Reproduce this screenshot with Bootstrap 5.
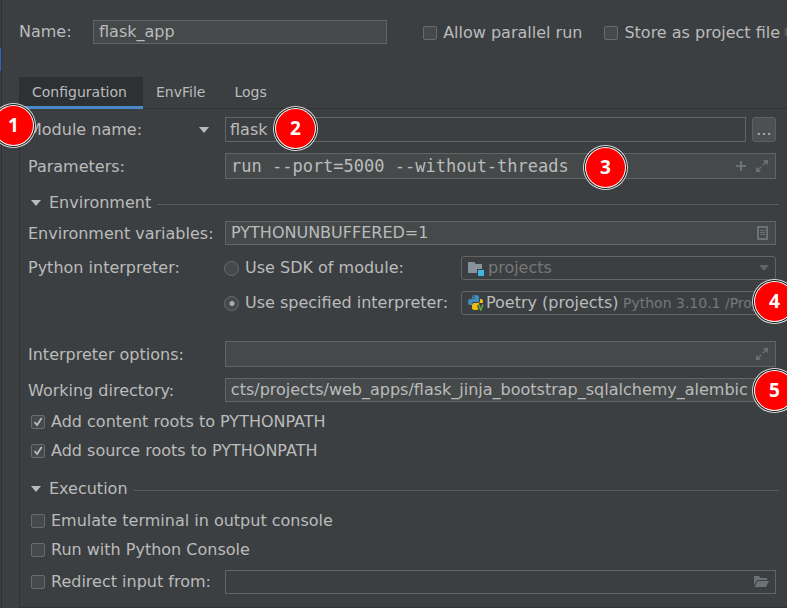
<!DOCTYPE html>
<html lang="en" data-bs-theme="dark">
<head>
<meta charset="utf-8">
<meta name="viewport" content="width=device-width, initial-scale=1">
<title>Run configuration: flask_app</title>
<link href="https://cdn.jsdelivr.net/npm/bootstrap@5.3.0/dist/css/bootstrap.min.css" rel="stylesheet">
<style>
  :root { --panel:#3c3f41; --field:#45494a; --edge:#646464; --ink:#bbbbbb; --line:#323232; --faint:#777777; --glyph:#6a7275; }
  body { background:var(--panel); color:var(--ink); font-family:"DejaVu Sans",sans-serif; font-size:16px; line-height:22px; overflow-x:hidden; }
  input, select, button { color:inherit; }
  .dialog-page { min-height:100vh; overflow:hidden; white-space:nowrap; }
  .dialog-main { min-width:0; }
  .tree-edge { width:2px; border-right:1px solid var(--line); }
  .tree-edge i { display:block; width:1px; height:23px; margin-top:48px; background:#2f65ca; }
  .top-bar { height:64px; padding-left:17px; }
  .top-bar .check-line { padding-top:1px; }
  .store-option { margin-left:22px; }
  .name-label { width:74px; }
  .field { display:flex; align-items:center; min-width:0; height:24px; background:var(--field); border:1px solid var(--edge); }
  .field.tall { height:26px; }
  .field.plain { height:25px; }
  .field.plain input { padding:0 4px; }
  .field.plain, .field.combo, .field.flat { background:var(--panel); }
  .field.combo { border-radius:3px; padding:0 6px; }
  .field.combo.off { color:var(--faint); }
  .field.path { padding-right:22px; }
  .field input { flex:1 1 0; min-width:0; width:100%; height:22px; padding:0 5px; background:transparent; border:0; outline:0; }
  .field select, .plain-select { appearance:none; background:transparent; border:0; padding:0; outline:0; }
  .field svg { flex:none; }
  .field button { display:flex; border:0; padding:0; margin-right:7px; background:transparent; color:var(--glyph); }
  .field button + button { margin-left:2px; }
  .field button.folder { margin-right:5px; }
  .name-field { width:294px; }
  .field .code-input { font-family:"DejaVu Sans Mono",monospace; font-size:17px; }
  .tick, .dot { appearance:none; flex:none; margin:0; width:14px; height:14px; background:var(--field) center/12px no-repeat; border:1px solid #6b6b6b; border-radius:2px; }
  .tick:checked { background-image:url("data:image/svg+xml,%3Csvg xmlns='http://www.w3.org/2000/svg' viewBox='0 0 12 12'%3E%3Cpath d='M2.5 6l2.6 3L9.7 2' fill='none' stroke='%23bbbbbb' stroke-width='1.8'/%3E%3C/svg%3E"); }
  .dot { width:15px; height:15px; border-radius:50%; }
  .dot:checked { background-image:radial-gradient(circle,#aaaaaa 2px,transparent 3px); }
  .check-line { display:flex; align-items:center; gap:6px; height:24px; }
  .config-body .check-line { margin-left:3px; }
  .config-tabs { margin:13px 0 0 17px; border-bottom:1px solid var(--line); font-size:14px; line-height:20px; }
  .config-tabs button { height:32px; margin-bottom:-1px; padding:0 16px 0 13px; border:0; border-bottom:3px solid transparent; background:transparent; }
  .config-tabs button.active { background:#2d3134; border-color:#4a88c7; }
  .config-body { margin-left:17px; border-left:1px solid var(--line); border-bottom:1px solid var(--line); padding:8px 11px 13px 8px; }
  .form-line { display:flex; align-items:center; position:relative; margin-bottom:11px; }
  .form-line > .caption { flex:none; width:197px; }
  .form-line > label.caption { padding-top:1px; }
  .choice { flex:none; width:237px; margin-left:-1px; display:flex; align-items:center; gap:6px; }
  .section-head { display:flex; align-items:center; gap:6px; height:24px; margin:0 -3px 0 3px; }
  .section-head button { display:flex; align-items:center; gap:8px; border:0; padding:0; background:transparent; }
  .section-head hr { flex:1; margin:2px 0 0; border-color:#5a5a5a; opacity:1; }
  .more-btn { flex:none; width:24px; height:25px; padding:0; margin-left:6px; color:var(--ink); background:#4c5052; border:1px solid #5e6060; border-radius:3px; line-height:20px; }
  .runtime { color:var(--faint); font-size:14px; }
  .step { position:absolute; z-index:2; width:39px; height:39px; border-radius:50%; background:#f00; color:#fff; text-align:center; font:700 19px/39px "Noto Sans",sans-serif; box-shadow:0 0 0 1px #fff,0 0 0 2px #111,0 0 0 3px #ddd; }
  .step-1 { left:-34px; top:-11px; }
  .step-2 { left:248px; top:-8px; }
  .step-3 { right:151px; top:-5px; }
  .step-4 { right:-18px; top:-9px; }
  .step-5 { right:-18px; top:-7px; }
  .gap-s { margin-bottom:5px; } .gap-sm { margin-bottom:6px; } .gap-m { margin-bottom:8px; } .gap-ml { margin-bottom:12px; } .gap-l { margin-bottom:14px; } .gap-xl { margin-bottom:26px; }
</style>
<script src="https://cdn.jsdelivr.net/npm/bootstrap@5.3.0/dist/js/bootstrap.bundle.min.js"></script>
</head>
<body>
<div class="dialog-page d-flex">
  <div class="tree-edge flex-shrink-0"><i></i></div>
  <main class="dialog-main flex-grow-1">
    <div class="top-bar d-flex align-items-center">
      <label class="name-label flex-shrink-0" for="cfgName">Name:</label>
      <div class="field name-field flex-shrink-0"><input id="cfgName" value="flask_app"></div>
      <label class="check-line flex-shrink-0 ms-auto"><input class="tick" type="checkbox">Allow parallel run</label>
      <label class="check-line store-option flex-shrink-0"><input class="tick" type="checkbox">Store as project file</label>
      <svg class="flex-shrink-0 ms-1" width="3" height="14" viewBox="0 0 3 14" fill="#5d6062"><path d="M3 3H1.500L.5 5l1 1.500v1L.5 9l1 2H3z"/></svg>
    </div>
    <div class="config-tabs d-flex" role="tablist">
      <button class="active" role="tab" aria-selected="true">Configuration</button>
      <button role="tab">EnvFile</button>
      <button role="tab">Logs</button>
    </div>
    <div class="config-body">
      <div class="form-line">
        <div class="caption d-flex align-items-center">
          <select class="plain-select flex-grow-1" aria-label="Target kind"><option>Module name:</option></select>
          <svg class="me-3" width="10" height="6" viewBox="0 0 10 6" fill="#bbb"><path d="M0 0h10L5 6z"/></svg>
        </div>
        <div class="field plain flex-grow-1"><input value="flask" aria-label="Module name"></div>
        <button class="more-btn" aria-label="Browse">...</button>
        <span class="step step-1">1</span><span class="step step-2">2</span>
      </div>
      <div class="form-line gap-ml">
        <label class="caption" for="params">Parameters:</label>
        <div class="field tall flex-grow-1">
          <input class="code-input" id="params" value="run --port=5000 --without-threads">
          <button aria-label="Insert macro"><svg width="12" height="12" viewBox="0 0 12 12" stroke="currentColor" stroke-width="2"><path d="M6 1v10M1 6h10"/></svg></button>
          <button aria-label="Expand"><svg width="12" height="12" viewBox="0 0 12 12" fill="currentColor" stroke="currentColor"><path stroke="none" d="M7 0h5v5zM0 7l5 5H0z"/><path stroke-width="1.5" d="M7 5l3-3M5 7l-3 3"/></svg></button>
        </div>
        <span class="step step-3">3</span>
      </div>
      <div class="section-head gap-sm"><button><svg width="10" height="6" viewBox="0 0 10 6" fill="#bbb"><path d="M0 0h10L5 6z"/></svg>Environment</button><hr></div>
      <div class="form-line">
        <label class="caption" for="envVars">Environment variables:</label>
        <div class="field flex-grow-1">
          <input id="envVars" value="PYTHONUNBUFFERED=1">
          <button aria-label="Edit variables"><svg width="11" height="14" viewBox="0 0 11 14" fill="none" stroke="currentColor"><path stroke-width="2" d="M1 1h9v12H1z"/><path d="M3 4.500h5M3 6.500h5M3 8.500h5"/></svg></button>
        </div>
      </div>
      <div class="form-line">
        <span class="caption">Python interpreter:</span>
        <label class="choice"><input class="dot" type="radio" name="sdk">Use SDK of module:</label>
        <div class="field combo off flex-grow-1">
          <svg class="me-1" width="16" height="16" viewBox="0 0 16 16"><path fill="#87939a" d="M0 2h6l2 2h6v5H9v4H0z"/><path fill="#40b6e0" d="M10 10h6v6h-6z"/></svg>
          <select class="flex-grow-1" aria-label="SDK module" disabled><option>projects</option></select>
          <svg width="10" height="6" viewBox="0 0 10 6" fill="#616466"><path d="M0 0h10L5 6z"/></svg>
        </div>
      </div>
      <div class="form-line gap-xl">
        <span class="caption"></span>
        <label class="choice"><input class="dot" type="radio" name="sdk" checked>Use specified interpreter:</label>
        <div class="field combo flex-grow-1 overflow-hidden">
          <svg width="18" height="16" viewBox="0 0 18 16"><path fill="#3e8ebf" d="M4 2q0-2 3.500-2T11 2v3.500Q11 7 9.500 7H5.500Q4 7 4 9v1H2Q0 10 0 7t2-3h5.500V3.400H4z"/><path fill="#f2bd0e" d="M12 4h1q2 0 2 3v1h-4v6q-1 1-3.500 1Q4 15 4 13v-2.500Q4 8 6 8h4q2 0 2-2z"/><circle cx="5.700" cy="1.700" r=".7" fill="#3c3f41"/><path d="M10.500 10l2.200 5 2.300-5" stroke="#3c3f41" stroke-width="3.500" fill="none"/><path d="M10.500 9.500l2.200 5.300 2.300-5.300" stroke="#62a83f" stroke-width="1.600" fill="none"/></svg>
          <select class="flex-shrink-0" aria-label="Interpreter"><option>Poetry (projects)</option></select>
          <span class="runtime ms-1">Python 3.10.1 /Proj</span>
        </div>
        <span class="step step-4">4</span>
      </div>
      <div class="form-line">
        <label class="caption" for="opts">Interpreter options:</label>
        <div class="field tall flex-grow-1">
          <input id="opts">
          <button aria-label="Expand"><svg width="12" height="12" viewBox="0 0 12 12" fill="currentColor" stroke="currentColor"><path stroke="none" d="M7 0h5v5zM0 7l5 5H0z"/><path stroke-width="1.5" d="M7 5l3-3M5 7l-3 3"/></svg></button>
        </div>
      </div>
      <div class="form-line gap-m">
        <label class="caption" for="workDir">Working directory:</label>
        <div class="field path flex-grow-1"><input id="workDir" value="ects/projects/web_apps/flask_jinja_bootstrap_sqlalchemy_alembic"></div>
        <span class="step step-5">5</span>
      </div>
      <label class="check-line gap-s"><input class="tick" type="checkbox" checked>Add content roots to PYTHONPATH</label>
      <label class="check-line gap-l"><input class="tick" type="checkbox" checked>Add source roots to PYTHONPATH</label>
      <div class="section-head gap-m"><button><svg width="10" height="6" viewBox="0 0 10 6" fill="#bbb"><path d="M0 0h10L5 6z"/></svg>Execution</button><hr></div>
      <label class="check-line gap-s"><input class="tick" type="checkbox">Emulate terminal in output console</label>
      <label class="check-line gap-m"><input class="tick" type="checkbox">Run with Python Console</label>
      <div class="form-line mb-0">
        <div class="caption"><label class="check-line"><input class="tick" type="checkbox">Redirect input from:</label></div>
        <div class="field flat flex-grow-1">
          <input aria-label="Input file">
          <button class="folder" aria-label="Browse files"><svg width="16" height="12" viewBox="0 0 16 12" fill="currentColor"><path d="M0 0h5l1.500 2H13v2H3L0 9.500z"/><path d="M3.500 5H15l-3 6H.5z"/></svg></button>
        </div>
      </div>
    </div>
  </main>
</div>
<script>
  // Long paths show their last folder first.
  const dir = document.getElementById('workDir');
  dir.scrollLeft = dir.scrollWidth;
</script>
</body>
</html>
